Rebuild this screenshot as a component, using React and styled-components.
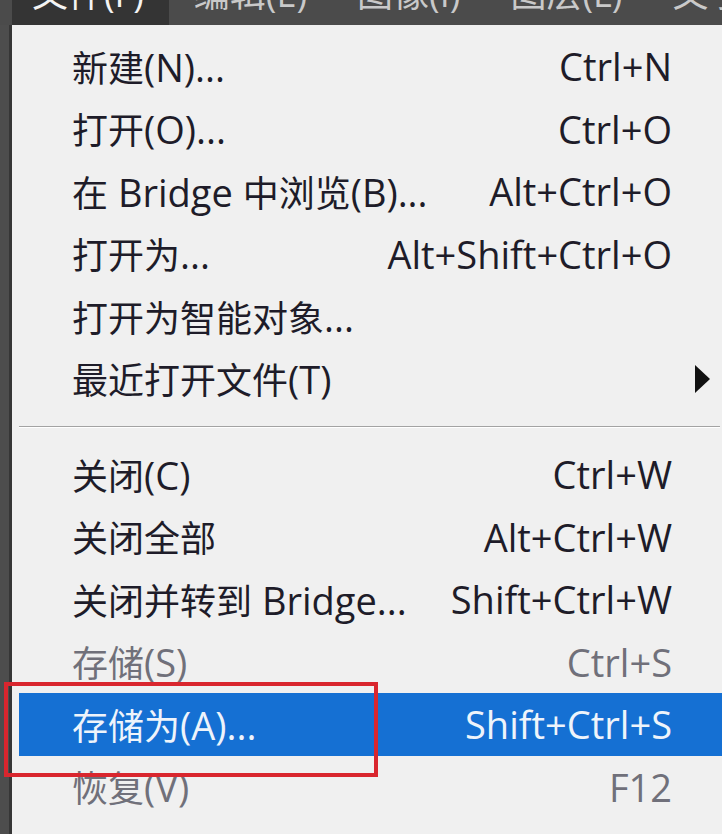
import React from 'react';
import styled, { createGlobalStyle } from 'styled-components';

const GlobalStyle = createGlobalStyle`
  html, body {
    margin: 0;
    padding: 0;
    background: #f0f0f0;
  }
  body {
    font-family: "Open Sans", "Noto Sans CJK SC", sans-serif;
  }
`;

const Screen = styled.div`
  position: relative;
  width: 722px;
  height: 834px;
  overflow: hidden;
  background: #4a4a4a;
  display: flex;
  flex-direction: column;
`;

const TopBar = styled.div`
  height: 25px;
  flex: none;
  display: flex;
  padding-left: 12px;
  background: #4b4b4b;
  overflow: hidden;
`;

const MenuTitle = styled.div`
  height: 25px;
  padding: 0 25px 0 ${(p) => (p.first ? '20px' : '25px')};
  background: ${(p) => (p.active ? '#343434' : 'transparent')};
  color: ${(p) => (p.active ? '#f4f4f4' : '#c9c9c9')};
  font-size: 36px;
  line-height: 1;
  white-space: nowrap;
`;

const TitleText = styled.div`
  margin-top: -24px;
`;

const Body = styled.div`
  flex: 1;
  display: flex;
`;

const SideStrip = styled.div`
  width: 9px;
  flex: none;
  background: #4d4d4d;
  border-right: 3px solid #363636;
`;

const MenuPanel = styled.div`
  flex: 1;
  background: #f0f0f0;
  padding: 10px 0 0 7px;
`;

const MenuRow = styled.div`
  height: 62.5px;
  display: flex;
  align-items: center;
  padding: 0 12px 0 53px;
  font-size: 36px;
  background: ${(p) => (p.highlight ? '#1570d3' : 'transparent')};
  color: ${(p) => (p.highlight ? '#eef4fb' : p.disabled ? '#70707a' : '#1e1c29')};
  white-space: nowrap;
`;

const Label = styled.span`
  flex: 1;
`;

/* latin runs render a touch larger than the CJK glyphs, like YaHei does */
const Latin = styled.span`
  font-size: 38px;
`;

const Shortcut = styled.span`
  font-size: 38px;
`;

const ArrowCell = styled.span`
  width: 38px;
  display: flex;
  justify-content: flex-end;
  align-items: center;
`;

const Separator = styled.div`
  height: 33px;
  display: flex;
  align-items: center;
  padding-right: 2px;

  &::after {
    content: '';
    flex: 1;
    height: 1px;
    background: #a3a3a3;
    box-shadow: 0 1px 0 #ffffff;
  }
`;

const RedMark = styled.div`
  position: absolute;
  left: 4px;
  top: 682px;
  width: 366px;
  height: 87px;
  border: 4px solid #d9262e;
`;

const SubArrow = () => (
  <svg width="16" height="28" viewBox="0 0 16 28">
    <path d="M1 0 L16 14 L1 28 Z" fill="#111" />
  </svg>
);

const mixed = (text) =>
  text.split(/([\u4e00-\u9fff]+)/).filter(Boolean).map((part, i) =>
    /[\u4e00-\u9fff]/.test(part) ? part : <Latin key={i}>{part}</Latin>
  );

const titles = ['文件(F)', '编辑(E)', '图像(I)', '图层(L)', '文字(Y)'];

const groups = [
  [
    { label: '新建(N)...', key: 'Ctrl+N' },
    { label: '打开(O)...', key: 'Ctrl+O' },
    { label: '在 Bridge 中浏览(B)...', key: 'Alt+Ctrl+O' },
    { label: '打开为...', key: 'Alt+Shift+Ctrl+O' },
    { label: '打开为智能对象...' },
    { label: '最近打开文件(T)', sub: true },
  ],
  [
    { label: '关闭(C)', key: 'Ctrl+W' },
    { label: '关闭全部', key: 'Alt+Ctrl+W' },
    { label: '关闭并转到 Bridge...', key: 'Shift+Ctrl+W' },
    { label: '存储(S)', key: 'Ctrl+S', disabled: true },
    { label: '存储为(A)...', key: 'Shift+Ctrl+S', highlight: true },
    { label: '恢复(V)', key: 'F12', disabled: true },
  ],
];

export default function App() {
  return (
    <Screen>
      <GlobalStyle />
      <TopBar>
        {titles.map((t, i) => (
          <MenuTitle key={t} first={i === 0} active={i === 0}>
            <TitleText>{t}</TitleText>
          </MenuTitle>
        ))}
      </TopBar>
      <Body>
        <SideStrip />
        <MenuPanel>
          {groups.map((items, gi) => (
            <React.Fragment key={gi}>
              {gi > 0 && <Separator />}
              {items.map((it) => (
                <MenuRow key={it.label} highlight={it.highlight} disabled={it.disabled}>
                  <Label>{mixed(it.label)}</Label>
                  {it.key && <Shortcut>{it.key}</Shortcut>}
                  <ArrowCell>{it.sub && <SubArrow />}</ArrowCell>
                </MenuRow>
              ))}
            </React.Fragment>
          ))}
        </MenuPanel>
      </Body>
      <RedMark />
    </Screen>
  );
}
